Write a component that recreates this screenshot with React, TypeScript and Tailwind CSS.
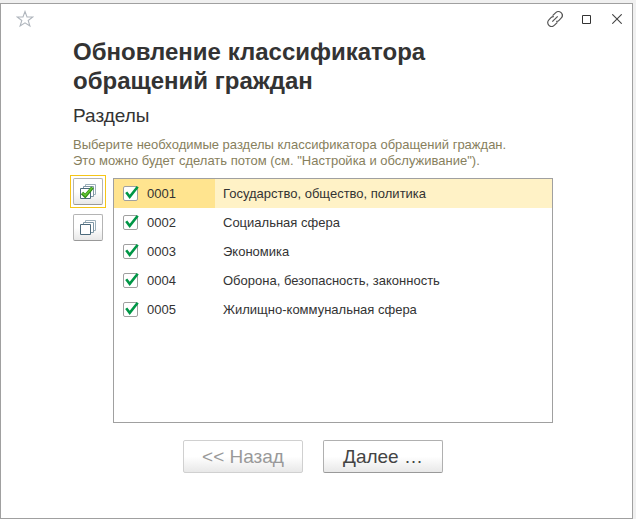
import { useState } from "react";

const sections = [
  { code: "0001", name: "Государство, общество, политика" },
  { code: "0002", name: "Социальная сфера" },
  { code: "0003", name: "Экономика" },
  { code: "0004", name: "Оборона, безопасность, законность" },
  { code: "0005", name: "Жилищно-коммунальная сфера" },
];

function StarIcon() {
  return (
    <svg width="18" height="18" viewBox="0 0 18 18" fill="none" stroke="#b0b6bd" strokeWidth="1.1">
      <path d="M9 1.5 L11 7 L16.8 7 L12.2 10.5 L13.9 16 L9 12.8 L4.1 16 L5.8 10.5 L1.2 7 L7 7 Z" />
    </svg>
  );
}

function LinkIcon() {
  return (
    <svg width="16" height="16" viewBox="0 0 16 16" fill="none" stroke="#555" strokeWidth="1.2">
      <path d="M5.600 4.700 L8.500 1.800 C10.200 .1 12.600 .2 14.100 1.700 C15.700 3.300 15.700 5.600 14.100 7.200 L12 9.300 C11.200 10.100 10.300 10.400 9.200 10.300" />
      <path d="M10.400 11.300 L7.500 14.200 C5.800 15.900 3.400 15.800 1.900 14.300 C.3 12.700 .3 10.400 1.900 8.800 L4 6.700 C4.800 5.900 5.700 5.600 6.800 5.700" />
      <path d="M5.300 10.700 L10.700 5.300" />
    </svg>
  );
}

function StackIcon({ checked }: { checked: boolean }) {
  return (
    <svg width="16" height="16" viewBox="0 0 16 16" fill="#fff">
      <path d="M5.500 .5h10v10h-10z" stroke="#9db0bb" />
      <path d="M3.500 2.500h10v10h-10z" stroke="#7f97a5" />
      <path d="M.5 4.500h10v10h-10z" stroke="#4c6a7c" />
      {checked && (
        <>
          <path d="M2 9 L5.200 12 L12.500 3.500" fill="none" stroke="#2f8c14" strokeWidth="3.400" />
          <path d="M2.500 9 L5.200 11.500 L12 3.700" fill="none" stroke="#62c332" strokeWidth="1.600" />
        </>
      )}
    </svg>
  );
}

function CheckBox({ checked, label, onChange }: { checked: boolean; label: string; onChange: () => void }) {
  return (
    <span className="relative block size-[15px]">
      <input
        type="checkbox"
        aria-label={label}
        checked={checked}
        onChange={onChange}
        className="block size-[15px] appearance-none rounded-xs border border-[#a0a0a0] bg-white"
      />
      {checked && (
        <svg className="pointer-events-none absolute top-0 left-0 overflow-visible" width="15" height="15" viewBox="0 0 15 15" fill="none" stroke="#009646" strokeWidth="2.600">
          <path d="M3.200 6.300 L6.700 10.800 L14.700 0.800" />
        </svg>
      )}
    </span>
  );
}

const toolButton =
  "flex h-[27px] w-[30px] items-center justify-center rounded-xs border border-[#b4b4b4] border-b-[#999] bg-linear-to-b from-white from-50% to-[#e8e8e8]";
const navButton =
  "h-[33px] w-[120px] rounded-xs border bg-linear-to-b from-white from-50% to-[#e8e8e8] text-[19px] leading-6";

export default function App() {
  const [checks, setChecks] = useState(sections.map(() => true));
  const setAll = (value: boolean) => setChecks(sections.map(() => value));

  return (
    <div className="flex min-h-screen flex-col bg-[#f0f0f0] pt-[3px] pr-[3px] font-['Liberation_Sans',Arial,sans-serif] text-[13px] leading-4 text-[#333]">
      <main className="flex grow flex-col border border-[#a0a0a0] bg-white">
        <header className="flex h-[30px] items-center justify-between pr-[7px] pl-[15px]">
          <button type="button" aria-label="Добавить в избранное">
            <StarIcon />
          </button>
          <div className="flex items-center gap-[15px]">
            <button type="button" aria-label="Получить ссылку">
              <LinkIcon />
            </button>
            <button type="button" aria-label="Развернуть" className="flex size-4 items-center justify-center">
              <svg width="10" height="10" viewBox="0 0 10 10" fill="none" stroke="#333">
                <path d="M1.500 1.500h8v8h-8z" />
              </svg>
            </button>
            <button type="button" aria-label="Закрыть" className="flex size-4 items-center justify-center">
              <svg width="10" height="10" viewBox="0 0 10 10" stroke="#444" strokeWidth="1.100">
                <path d="M.3 .3 L9.700 9.700 M9.700 .3 L.3 9.700" />
              </svg>
            </button>
          </div>
        </header>

        <div className="pt-[3px] pr-[79px] pl-[72px]">
          <h1 className="max-w-[400px] text-[24px] leading-[29px] font-bold">Обновление классификатора обращений граждан</h1>
          <h2 className="mt-[9px] text-[19px] leading-6">Разделы</h2>
          <p className="mt-[9px] text-[#87805d]">
            Выберите необходимые разделы классификатора обращений граждан.
            <br />
            Это можно будет сделать потом (см. "Настройка и обслуживание").
          </p>

          <div className="mt-[9px] flex gap-[10px]">
            <div className="flex w-[30px] flex-col gap-[9px]">
              <div className="-m-[3px] border border-[#f5c518] p-[2px]">
                <button
                  type="button"
                  aria-label="Установить флажки"
                  onClick={() => setAll(true)}
                  className={toolButton}
                >
                  <StackIcon checked />
                </button>
              </div>
              <button type="button" aria-label="Снять флажки" onClick={() => setAll(false)} className={toolButton}>
                <StackIcon checked={false} />
              </button>
            </div>
            <div className="h-[245px] grow border border-[#a0a0a0]">
              <table className="w-full border-collapse">
                <tbody>
                  {sections.map((section, i) => (
                    <tr key={section.code} className={i === 0 ? "h-[29px] bg-[#fff2c6]" : "h-[29px]"}>
                      <td className={i === 0 ? "w-[101px] bg-[#ffe48f] pl-[9px]" : "w-[101px] pl-[9px]"}>
                        <div className="flex items-center gap-[9px]">
                          <CheckBox
                            checked={checks[i]}
                            label={section.name}
                            onChange={() => setChecks(checks.map((c, j) => (j === i ? !c : c)))}
                          />
                          {section.code}
                        </div>
                      </td>
                      <td className="pl-2">{section.name}</td>
                    </tr>
                  ))}
                </tbody>
              </table>
            </div>
          </div>
        </div>

        <footer className="mt-[17px] flex justify-center gap-5 pr-[7px]">
          <button type="button" disabled className={`${navButton} border-[#d0d0d0] text-[#999]`}>
            &lt;&lt; Назад
          </button>
          <button type="button" className={`${navButton} border-[#b0b0b0] border-b-[#999] text-[#444]`}>
            Далее …
          </button>
        </footer>
      </main>
    </div>
  );
}
